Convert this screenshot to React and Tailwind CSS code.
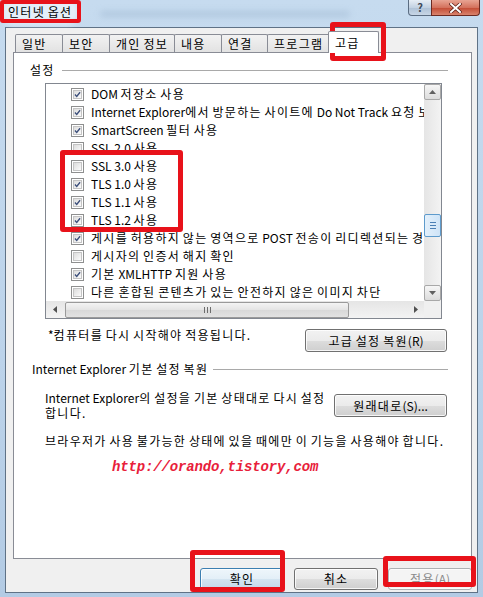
import React from "react";

const rows = [
  ["DOM 저장소 사용", true],
  ["Internet Explorer에서 방문하는 사이트에 Do Not Track 요청 보내기", true],
  ["SmartScreen 필터 사용", true],
  ["SSL 2.0 사용", false],
  ["SSL 3.0 사용", false],
  ["TLS 1.0 사용", true],
  ["TLS 1.1 사용", true],
  ["TLS 1.2 사용", true],
  ["게시를 허용하지 않는 영역으로 POST 전송이 리디렉션되는 경우 경고", true],
  ["게시자의 인증서 해지 확인", false],
  ["기본 XMLHTTP 지원 사용", true],
  ["다른 혼합된 콘텐츠가 있는 안전하지 않은 이미지 차단", false],
];

// Hangul runs get a touch of extra spacing so that they take the width the reference font gives them
function K({ t }) {
  const parts = t.split(/([\uAC00-\uD7A3\u3131-\u318E]+)/);
  return (
    <span>
      {parts.map((p, i) =>
        /[\uAC00-\uD7A3\u3131-\u318E]/.test(p) ? (
          <span key={i} className="tracking-[1.3px]">
            {p}
          </span>
        ) : (
          <React.Fragment key={i}>{p}</React.Fragment>
        )
      )}
    </span>
  );
}

function CheckBox({ checked }) {
  return (
    <div className="w-[13px] h-[13px] shrink-0 border border-[#8e8f8f] bg-white p-[1px]">
      <div className="w-full h-full border border-[#c4c4c4] bg-[linear-gradient(135deg,#dcdcdc,#fbfbfb)] flex items-center justify-center">
        {checked && (
          <svg width="9" height="9" viewBox="0 0 9 9">
            <path d="M1.2 4.6 L3.5 7 L7.8 1.6" fill="none" stroke="#3b4e7a" strokeWidth="1.7" />
          </svg>
        )}
      </div>
    </div>
  );
}

function Btn({ children, className = "", variant = "normal" }) {
  const styles = {
    normal:
      "border-[#707070] bg-[linear-gradient(#f2f2f2_0%,#ebebeb_50%,#dddddd_51%,#cfcfcf_100%)] text-black",
    default:
      "border-[#3c7fb1] bg-[linear-gradient(#eef6fb_0%,#e3eff7_50%,#d3e4f0_51%,#c4d9e9_100%)] text-black",
    disabled: "border-[#adb2b5] bg-[#f4f4f4] text-[#8a8a8a]",
  };
  return (
    <div
      className={`flex items-center justify-center rounded-[3px] border shadow-[inset_0_0_0_1px_rgba(255,255,255,0.8)] text-[12px] leading-[14px] whitespace-nowrap ${styles[variant]} ${className}`}
    >
      {children}
    </div>
  );
}

function Tab({ label, w, selected }) {
  if (selected) {
    return (
      <div
        className={`${w} h-[22px] -ml-[2px] -mb-px relative z-10 bg-white border border-b-0 border-[#898c95] rounded-t-[2px] pl-[6px] pt-[3px] text-[12px] leading-[15px] whitespace-nowrap`}
      >
        <K t={label} />
      </div>
    );
  }
  return (
    <div
      className={`${w} h-[18px] -ml-px border border-b-0 border-[#898c95] rounded-t-[2px] bg-[linear-gradient(#f2f2f2,#e2e2e2)] pl-[6px] pt-[1px] text-[12px] leading-[15px] whitespace-nowrap overflow-hidden`}
    >
      <K t={label} />
    </div>
  );
}

function RedBox({ className }) {
  return (
    <div
      className={`absolute border-[#e8121a] rounded-[3px] pointer-events-none ${className}`}
    />
  );
}

export default function App() {
  return (
    <div className="w-[483px] h-[597px] relative overflow-hidden bg-[linear-gradient(180deg,#c6dbef_0%,#bcd3ea_60%,#b3cbe4_100%)] font-['Noto_Sans_CJK_KR','Noto_Sans',sans-serif] text-black flex flex-col">
      {/* Title bar */}
      <div className="h-[27px] shrink-0 flex items-start relative">
        <div className="ml-[6px] mt-[3px] px-[2px] h-[17px] bg-[#e4eef8] rounded-[6px] shadow-[0_0_6px_4px_rgba(235,243,251,0.9)] text-[12px] leading-[17px] text-black whitespace-nowrap">
          <K t="인터넷 옵션" />
        </div>
        <div className="ml-[26px] mt-[11px] w-[250px] h-[6px] rounded-full bg-[#9cb5cf] opacity-50 blur-[3px]" />
        <div className="ml-auto mr-[3px] flex">
          <div className="w-[24px] h-[16px] border border-t-0 border-[#5b6d82] rounded-bl-[4px] bg-[linear-gradient(#e6edf5,#c3d2e2_50%,#aec1d6_51%,#c7d6e6)] flex items-center justify-center text-[11px] leading-[11px] font-bold text-[#3e4a58]">
            ?
          </div>
          <div className="w-[49px] h-[16px] -ml-px border border-t-0 border-[#6b2a22] rounded-br-[4px] bg-[linear-gradient(#e8a493,#d4725d_50%,#c24a33_51%,#d9836d)] flex items-center justify-center">
            <svg width="13" height="10" viewBox="0 0 13 10">
              <path d="M2 1 L11 9 M11 1 L2 9" stroke="#5a1d14" strokeWidth="3.4" strokeLinecap="square" />
              <path d="M2 1 L11 9 M11 1 L2 9" stroke="#ffffff" strokeWidth="2" strokeLinecap="square" />
            </svg>
          </div>
        </div>
      </div>

      {/* Dialog body */}
      <div className="mx-[5px] h-[566px] shrink-0 border border-[#5f7286] bg-[#f0f0f0] flex flex-col pl-[7px] pr-[5px]">
        {/* tabs */}
        <div className="h-[24px] shrink-0 flex items-end pl-[3px]">
          <Tab label="일반" w="w-[48px]" />
          <Tab label="보안" w="w-[48px]" />
          <Tab label="개인 정보" w="w-[66px]" />
          <Tab label="내용" w="w-[48px]" />
          <Tab label="연결" w="w-[47px]" />
          <Tab label="프로그램" w="w-[63px]" />
          <Tab label="고급" w="w-[51px]" selected />
        </div>

        {/* tab panel */}
        <div className="h-[507px] shrink-0 border border-[#898c95] bg-white flex flex-col text-[12px]">
          {/* group 설정 */}
          <div className="mt-[9px] h-[16px] flex items-center">
            <span className="ml-[16px] leading-[16px]"><K t="설정" /></span>
            <div className="flex-1 ml-[7px] mr-[23px] h-px bg-[#a9a9a9]" />
          </div>

          {/* list box */}
          <div className="mt-[5px] ml-[31px] w-[397px] h-[236px] border border-[#828790] flex flex-col">
            <div className="flex h-[217px]">
              <div className="flex-1 overflow-hidden pt-[1px]">
                {rows.map(([t, c], i) => (
                  <div key={i} className="h-[18px] flex items-center pl-[25px] whitespace-nowrap">
                    <CheckBox checked={c} />
                    <span className="ml-[7px] leading-[16px]"><K t={t} /></span>
                  </div>
                ))}
              </div>
              {/* vertical scrollbar */}
              <div className="w-[17px] flex flex-col bg-[linear-gradient(90deg,#e5e5e5,#f3f3f3)]">
                <div className="h-[16px] border border-[#a8a8a8] rounded-[2px] bg-[linear-gradient(#f6f6f6,#dcdcdc)] flex items-center justify-center">
                  <svg width="7" height="4" viewBox="0 0 7 4"><path d="M0 4 L3.5 0 L7 4 Z" fill="#606060" /></svg>
                </div>
                <div className="h-[114px]" />
                <div className="h-[23px] border border-[#5e9bcc] rounded-[2px] bg-[linear-gradient(90deg,#e3f0fb,#cfe4f7)] flex flex-col items-center justify-center gap-[2px]">
                  <div className="w-[6px] h-px bg-[#4a7fb5]" />
                  <div className="w-[6px] h-px bg-[#4a7fb5]" />
                  <div className="w-[6px] h-px bg-[#4a7fb5]" />
                </div>
                <div className="flex-1" />
                <div className="h-[16px] border border-[#a8a8a8] rounded-[2px] bg-[linear-gradient(#f6f6f6,#dcdcdc)] flex items-center justify-center">
                  <svg width="7" height="4" viewBox="0 0 7 4"><path d="M0 0 L7 0 L3.5 4 Z" fill="#606060" /></svg>
                </div>
              </div>
            </div>
            {/* horizontal scrollbar */}
            <div className="h-[17px] flex bg-[linear-gradient(#e5e5e5,#f3f3f3)]">
              <div className="w-[17px] flex items-center justify-center">
                <svg width="4" height="7" viewBox="0 0 4 7"><path d="M4 0 L0 3.5 L4 7 Z" fill="#505050" /></svg>
              </div>
              <div className="ml-[2px] w-[284px] h-[16px] mt-px border border-[#9a9a9a] rounded-[2px] bg-[linear-gradient(#f4f4f4,#e4e4e4_50%,#d8d8d8_51%,#e2e2e2)] flex items-center justify-center gap-[2px]">
                <div className="w-px h-[6px] bg-[#6d6d6d]" />
                <div className="w-px h-[6px] bg-[#6d6d6d]" />
                <div className="w-px h-[6px] bg-[#6d6d6d]" />
              </div>
              <div className="flex-1" />
              <div className="w-[17px] flex items-center justify-center">
                <svg width="4" height="7" viewBox="0 0 4 7"><path d="M0 0 L4 3.5 L0 7 Z" fill="#505050" /></svg>
              </div>
              <div className="w-[17px] bg-[#f0f0f0]" />
            </div>
          </div>

          {/* restart note + reset advanced */}
          <div className="mt-[10px] flex items-start">
            <span className="ml-[34px] -mt-[2px] leading-[16px] whitespace-nowrap"><K t="*컴퓨터를 다시 시작해야 적용됩니다." /></span>
            <Btn className="ml-auto mr-[24px] w-[142px] h-[23px]"><K t="고급 설정 복원(R)" /></Btn>
          </div>

          {/* group reset */}
          <div className="mt-[9px] h-[16px] flex items-center">
            <span className="ml-[18px] leading-[16px] whitespace-nowrap"><K t="Internet Explorer 기본 설정 복원" /></span>
            <div className="flex-1 ml-[5px] mr-[23px] h-px bg-[#a9a9a9]" />
          </div>

          <div className="mt-[13px] flex items-start">
            <div className="ml-[31px] leading-[15px] whitespace-nowrap">
              <K t="Internet Explorer의 설정을 기본 상태대로 다시 설정" />
              <br />
              <K t="합니다." />
            </div>
            <Btn className="ml-auto mr-[24px] mt-[4px] w-[113px] h-[23px]"><K t="원래대로(S)..." /></Btn>
          </div>

          <div className="mt-[13px] ml-[31px] leading-[16px] whitespace-nowrap">
            <K t="브라우저가 사용 불가능한 상태에 있을 때에만 이 기능을 사용해야 합니다." />
          </div>

          <div className="mt-[9px] ml-[98px] leading-[18px] text-[14px] font-bold italic text-[#e8203a] font-['Liberation_Mono',monospace] tracking-[-0.15px]">
            http://orando,tistory,com
          </div>
        </div>

        {/* bottom buttons */}
        <div className="mt-[9px] flex justify-end gap-[10px]">
          <Btn variant="default" className="w-[84px] h-[22px]"><K t="확인" /></Btn>
          <Btn className="w-[84px] h-[22px]"><K t="취소" /></Btn>
          <Btn variant="disabled" className="w-[84px] h-[22px]"><K t="적용(A)" /></Btn>
        </div>
      </div>

      {/* annotation boxes */}
      <RedBox className="left-0 top-0 w-[81px] h-[23px] border-[4px]" />
      <RedBox className="left-[330px] top-[22px] w-[56px] h-[39px] border-[5px]" />
      <RedBox className="left-[60px] top-[150px] w-[123px] h-[82px] border-[5px]" />
      <RedBox className="left-[190px] top-[550px] w-[95px] h-[42px] border-[5px]" />
      <RedBox className="left-[383px] top-[556px] w-[93px] h-[31px] border-[5px]" />
    </div>
  );
}
